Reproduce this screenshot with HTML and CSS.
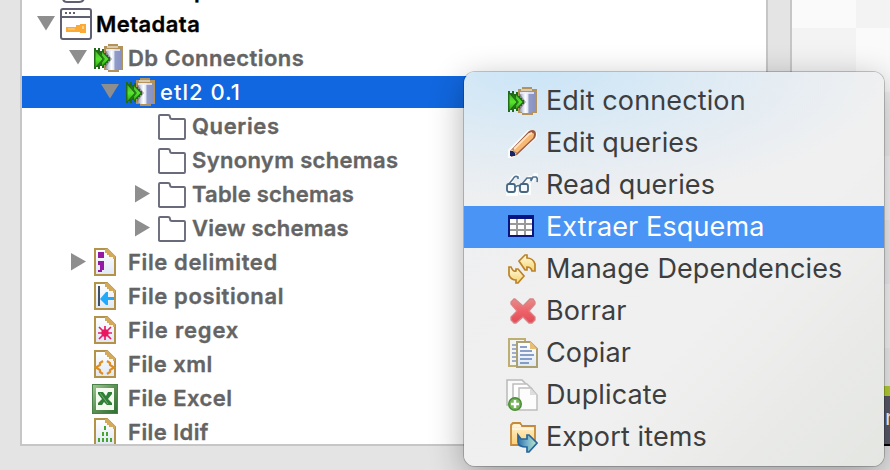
FILE: index.html
```html
<!DOCTYPE html>
<html lang="es">
<head>
<meta charset="utf-8">
<title>Metadata</title>
<link rel="stylesheet" href="styles.css">
</head>
<body>
<svg class="defs" width="0" height="0">
  <defs>
    <linearGradient id="cyl"><stop offset="0" stop-color="#8f8a88"/><stop offset=".25" stop-color="#d5dcf0"/><stop offset=".4" stop-color="#fff"/><stop offset=".56" stop-color="#dfe4f5"/><stop offset=".62" stop-color="#929ccb"/><stop offset="1" stop-color="#8793c2"/></linearGradient>
    <linearGradient id="grn" x2="0" y2="1"><stop offset="0" stop-color="#4cb52a"/><stop offset=".5" stop-color="#57e52e"/><stop offset="1" stop-color="#35a31a"/></linearGradient>
    <linearGradient id="paper" x2="0" y2="1"><stop offset="0" stop-color="#fff"/><stop offset="1" stop-color="#dfe8f5"/></linearGradient>
    <linearGradient id="xls" x2="1" y2="1"><stop offset="0" stop-color="#9dc792"/><stop offset=".5" stop-color="#5c8f55"/><stop offset="1" stop-color="#2e7032"/></linearGradient>
    <linearGradient id="gold" x2="0" y2="1"><stop offset="0" stop-color="#fffbe0"/><stop offset="1" stop-color="#f5d26c"/></linearGradient>
    <linearGradient id="red" x2="0" y2="1"><stop offset="0" stop-color="#e58d89"/><stop offset=".5" stop-color="#ef626a"/><stop offset="1" stop-color="#e34b55"/></linearGradient>
    <linearGradient id="fold" x2="0" y2="1"><stop offset="0" stop-color="#fff3d2"/><stop offset="1" stop-color="#fbcf74"/></linearGradient>
    <linearGradient id="arr"><stop offset="0" stop-color="#2e6fa8"/><stop offset=".5" stop-color="#78b5cc"/><stop offset="1" stop-color="#bfe5c4"/></linearGradient>
    <symbol id="db" viewBox="0 0 32 32">
      <path d="M12 4h4V2h10v2h5v24h-4v2H16v-2h-4z" fill="#b3935a"/>
      <path d="M15 4h11v2H15z" fill="#d8cbb0"/>
      <path d="M13 7h16v20h-3v1H16v-1h-3z" fill="url(#cyl)"/>
      <path d="M14 7h14v2H14z" fill="#eceef6" opacity=".8"/>
      <path d="M13 8l7 9-7 9z" fill="#66635e" opacity=".55"/>
      <path d="M2 6h2v2h2V6h2v3h2V7h2v4h2v2h2v2h2v4h-2v2h-2v2h-2v3h-2v-2H8v3H6v-2H4v2H2z" fill="#206b16"/>
      <path d="M3.500 9l7 8-7 8z" fill="url(#grn)"/>
      <path d="M10 10l6.500 7-6.500 7v-4l2-3-2-3z" fill="url(#grn)"/>
      <path d="M7 10.500l5.200 6.500L7 23.500" fill="none" stroke="#247d18" stroke-width="1.100"/>
    </symbol>
    <symbol id="sql" viewBox="0 0 32 32">
      <path d="M3 8v16q0 4 4 4h12q5 0 5-5V8" fill="#fff" stroke="#5f6071" stroke-width="2"/>
      <path d="M4 23h15l5-3" fill="none" stroke="#5f6071" stroke-width="2"/>
    </symbol>
    <symbol id="meta" viewBox="0 0 32 32">
      <rect x="1" y="1" width="30" height="30" rx="2" fill="#fff" stroke="#5f6071" stroke-width="2"/>
      <path d="M1 9h30" stroke="#5f6071" stroke-width="2"/>
      <path d="M5 5h2M9 5h2M13 5h2" stroke="#5f6071" stroke-width="2"/>
      <path d="M6 19h10v-2h4v-1h6v9h-6v-1H6z" fill="#fbab35"/>
      <path d="M8 21h7" stroke="#ffd48b"/><path d="M22 18h2v3h-2z" fill="#ffcf80"/>
    </symbol>
    <symbol id="folder" viewBox="0 0 32 32">
      <path d="M3 29V6q0-1 1-1h8q2 0 2 2 0 2 2 2h12q1 0 1 1v18q0 1-1 1H4q-1 0-1-1z" fill="#fff" stroke="#696b7b" stroke-width="1.900"/>
    </symbol>
    <symbol id="page" viewBox="0 0 32 32">
      <path d="M3 3h12l8 8v18H3z" fill="url(#paper)" stroke="#b4924a" stroke-width="2"/>
      <path d="M13 3h3l7 7v3h-2v-2h-4V9h-2V7h-2z" fill="#d3aa5c"/>
    </symbol>
    <symbol id="delim" viewBox="0 0 32 32"><use href="#page"/>
      <path d="M6 6h6v6H6zM6 15h6v9h-2v2H6v-2h2v-5H6z" fill="#951aa3"/></symbol>
    <symbol id="posit" viewBox="0 0 32 32"><use href="#page"/>
      <path d="M6 6h2v20H6z" fill="#405064"/><path d="M8 19l6-7h2v5h6v3h-6v5h-2z" fill="#22a9fa"/></symbol>
    <symbol id="regex" viewBox="0 0 32 32"><use href="#page"/>
      <path d="M13 12v14M6 19h14M7 13l12 12M19 13L7 25" stroke="#ed1968" stroke-width="1.700" fill="none"/><circle cx="13" cy="19" r="3.700" fill="#e9175f"/></symbol>
    <symbol id="xml" viewBox="0 0 32 32"><use href="#page"/>
      <path d="M11 13l-3 2v2l-4 2.500 4 2.500v2l3 2M15 13l3 2v2l4 2.500-4 2.500v2l-3 2" stroke="#df8d22" stroke-width="2.200" fill="none"/></symbol>
    <symbol id="excel" viewBox="0 0 32 32">
      <path d="M0 2h26v30H0z" fill="#498247"/><path d="M1 3h24v28H1z" fill="url(#xls)"/>
      <path d="M4 6h18v22H4z" fill="#f5faf1"/><path d="M6 10h5l3 4 2-4h4v2l-4 5 4 4v2h-5l-3-3-2 3H6v-2l4-4-4-5z" fill="#307f38"/>
      <path d="M8 11l8 11" stroke="#73ae6b" stroke-width="1"/></symbol>
    <symbol id="ldif" viewBox="0 0 32 32"><use href="#page"/>
      <path d="M12 10h2v4h-2zM10 16h2v4h-2zM14 16h2v4h-2zM6 22h2v4H6zM10 22h2v4h-2zM14 22h2v4h-2zM18 22h2v4h-2z" fill="#47a52d"/></symbol>
    <symbol id="pencil" viewBox="0 0 32 32">
      <path d="M2 31v-8L22 3h6l3 3v5L11 28l-5 3z" fill="#fff" opacity=".85"/>
      <path d="M4 24L23 4q4-2 6 0 2 3 0 7L11 28l-6 2z" fill="#9b5940"/>
      <path d="M7 23L24 6q3-1 4 1 0 2-1 4L11 26z" fill="#f7b874"/>
      <path d="M8 22L23 7l3-1" stroke="#ffe4bd" stroke-width="2" fill="none"/>
      <path d="M6 22l5 5-3 1-4-3z" fill="#dccc9c"/><path d="M4 24h3l2 2v3H4z" fill="#172366"/>
    </symbol>
    <symbol id="glasses" viewBox="0 0 32 32">
      <path d="M2 18l5-9q4-4 6 0M18 18l4-8q2-3 5 0l2-4q3 0 3 3M1 17h9v8H1zM15 16h8v8h-8z" stroke="#fff" stroke-width="4" fill="none" opacity=".8"/>
      <path d="M2 16l5-6q2-4 5-2v2M16 15l5-6h4v3l2-4h3q2 1 1 5M10 18q2-3 4 0" stroke="#50718f" stroke-width="1.600" fill="none"/>
      <rect x="1" y="15" width="8" height="8" rx="2" fill="#f5faff" stroke="#456581" stroke-width="1.800"/>
      <rect x="14" y="15" width="8" height="8" rx="2" fill="#f5faff" stroke="#456581" stroke-width="1.800"/>
    </symbol>
    <symbol id="table" viewBox="0 0 32 32">
      <path d="M2 4h26v22H2z" fill="#06157f"/><path d="M4 8h22v16H4z" fill="#999"/>
      <path d="M4 8h6v4H4zM12 8h6v4h-6zM20 8h6v4h-6zM4 14h6v4H4zM12 14h6v4h-6zM20 14h6v4h-6zM4 20h6v4H4zM12 20h6v4h-6zM20 20h6v4h-6z" fill="#fff"/>
    </symbol>
    <symbol id="deps" viewBox="0 0 32 32">
      <path d="M13 8l6-6h2v3q6 0 8 6v7h-3q-1-4-5-4v3h-2z" fill="url(#gold)" stroke="#bb8228" stroke-width="1.700"/>
      <path d="M3 14h2q2 5 5 4v-2h2l6 7-6 7h-2v-3q-5 0-7-5z" fill="url(#gold)" stroke="#bb8228" stroke-width="1.700"/>
    </symbol>
    <symbol id="delete" viewBox="0 0 32 32">
      <path d="M9 4l8 7 7-7h3l2 3v2l-6 7 6 6v3l-3 3h-3l-6-6-7 6H8l-3-3v-3l6-6-6-7V7l3-3z" fill="url(#red)" stroke="#d98387" stroke-width="1.300"/>
    </symbol>
    <symbol id="copy" viewBox="0 0 32 32">
      <path d="M3 2h16v27H3z" fill="#f5f5f0" stroke="#bfae73" stroke-width="2"/>
      <path d="M6 8h5M6 12h5M6 16h5M6 20h5M6 24h5" stroke="#8297c0" stroke-width="1.700"/>
      <path d="M11 5h13l7 7v18H11z" fill="url(#paper)" stroke="#aaa071" stroke-width="2"/>
      <path d="M24 4l7 8h-7z" fill="#e8bf75"/>
      <path d="M14 10h7M14 14h12M14 18h14M14 22h12M14 26h9" stroke="#6482b8" stroke-width="1.700"/>
    </symbol>
    <symbol id="dup" viewBox="0 0 32 32">
      <path d="M1 1h15l5 5v20H1z" fill="#fafafa" stroke="#b9b9b9" stroke-width="1.500"/>
      <path d="M7 5h14l5 5v18H7z" fill="#fff" stroke="#bdbdbd" stroke-width="1.500"/>
      <path d="M13 9h12l6 7v15H13z" fill="#fcfcfc" stroke="#bdbdbd" stroke-width="1.500"/><path d="M24 9v7h7z" fill="#ddd"/>
      <circle cx="9" cy="25" r="7" fill="#4b8b39"/><circle cx="9" cy="25" r="5.500" fill="#75b458"/><path d="M9 21v8M5 25h8" stroke="#fff" stroke-width="2.500"/>
    </symbol>
    <symbol id="export" viewBox="0 0 32 32">
      <path d="M5 4l2-2h7l2 3h13v18l-2 1H5z" fill="url(#fold)" stroke="#c78a3b" stroke-width="1.800"/>
      <path d="M7 5h8M6 8h22" stroke="#fff5dc" stroke-width="2"/>
      <path d="M12 14l3 4h6v-4h2l8 8-8 9h-2v-5q-9 0-9-5z" fill="url(#arr)" stroke="#27669c" stroke-width="1.700"/>
    </symbol>
  </defs>
</svg>
<main class="window">
  <section class="tree">
    <div class="row lv0"><i class="tw"></i><svg class="ic"><use href="#sql"/></svg><span class="label black">SQL Templates</span></div>
    <div class="row lv0"><i class="tw open"></i><svg class="ic"><use href="#meta"/></svg><span class="label black">Metadata</span></div>
    <div class="row lv1"><i class="tw open"></i><svg class="ic"><use href="#db"/></svg><span class="label">Db Connections</span></div>
    <div class="row lv2 selected"><i class="tw open"></i><svg class="ic"><use href="#db"/></svg><span class="label">etl2 0.1</span></div>
    <div class="row lv3"><i class="tw"></i><svg class="ic"><use href="#folder"/></svg><span class="label wide">Queries</span></div>
    <div class="row lv3"><i class="tw"></i><svg class="ic"><use href="#folder"/></svg><span class="label snug">Synonym schemas</span></div>
    <div class="row lv3"><i class="tw closed"></i><svg class="ic"><use href="#folder"/></svg><span class="label tight">Table schemas</span></div>
    <div class="row lv3"><i class="tw closed"></i><svg class="ic"><use href="#folder"/></svg><span class="label tight">View schemas</span></div>
    <div class="row lv1"><i class="tw closed"></i><svg class="ic"><use href="#delim"/></svg><span class="label wide">File delimited</span></div>
    <div class="row lv1"><i class="tw"></i><svg class="ic"><use href="#posit"/></svg><span class="label wide">File positional</span></div>
    <div class="row lv1"><i class="tw"></i><svg class="ic"><use href="#regex"/></svg><span class="label wider">File regex</span></div>
    <div class="row lv1"><i class="tw"></i><svg class="ic"><use href="#xml"/></svg><span class="label">File xml</span></div>
    <div class="row lv1"><i class="tw"></i><svg class="ic"><use href="#excel"/></svg><span class="label">File Excel</span></div>
    <div class="row lv1"><i class="tw"></i><svg class="ic"><use href="#ldif"/></svg><span class="label">File ldif</span></div>
  </section>
  <section class="canvas"><div class="tab">n</div></section>
</main>
<nav class="menu">
  <div class="item"><svg class="ic"><use href="#db"/></svg><span>Edit connection</span></div>
  <div class="item"><svg class="ic"><use href="#pencil"/></svg><span>Edit queries</span></div>
  <div class="item"><svg class="ic"><use href="#glasses"/></svg><span>Read queries</span></div>
  <div class="item active"><svg class="ic"><use href="#table"/></svg><span>Extraer Esquema</span></div>
  <div class="item"><svg class="ic"><use href="#deps"/></svg><span>Manage Dependencies</span></div>
  <div class="item"><svg class="ic"><use href="#delete"/></svg><span>Borrar</span></div>
  <div class="item"><svg class="ic"><use href="#copy"/></svg><span>Copiar</span></div>
  <div class="item"><svg class="ic"><use href="#dup"/></svg><span>Duplicate</span></div>
  <div class="item"><svg class="ic"><use href="#export"/></svg><span>Export items</span></div>
</nav>
</body>
</html>
```
FILE: styles.css
```css
* { box-sizing: border-box; }
body {
  margin: 0;
  width: 890px;
  height: 470px;
  overflow: hidden;
  background: #e4e4e4;
  font-family: Inter, "Liberation Sans", sans-serif;
}
.defs { display: block; }
.window {
  display: grid;
  grid-template-columns: 748px 1fr;
  column-gap: 22px;
  height: 446px;
  padding-left: 20px;
}
.tree {
  height: 446px;
  overflow: hidden;
  background: #fff;
  border: 2px solid #c6c6c6;
  border-top: 0;
  display: flex;
  flex-direction: column;
}
.row {
  display: flex;
  align-items: center;
  flex: none;
  height: 34px;
}
.row:first-child { margin-top: -27px; }
.lv0 { padding-left: 14px; }
.lv1 { padding-left: 46px; }
.lv2 { padding-left: 78px; }
.lv3 { padding-left: 110px; }
.ic { width: 32px; height: 32px; flex: none; display: block; }
.tw {
  width: 20px;
  height: 20px;
  flex: none;
  margin-right: 4px;
}
.tw.open { background: #8e8e8e; clip-path: polygon(5% 10%, 95% 10%, 50% 83%); }
.tw.closed { background: #8e8e8e; clip-path: polygon(15% 5%, 90% 48%, 15% 93%); }
.label {
  margin-left: 4px;
  font-size: 22px;
  font-weight: 600;
  line-height: 34px;
  letter-spacing: .45px;
  -webkit-text-stroke: .35px currentColor;
  color: #646464;
  white-space: nowrap;
}
.tight { letter-spacing: .2px; }
.snug { letter-spacing: .33px; }
.wide { letter-spacing: .62px; }
.wider { letter-spacing: .8px; }
.black { color: #000; }
.selected { height: 32px; margin: 1px 0; background: #1167df; }
.selected .label { color: #fff; font-weight: 500; letter-spacing: 1px; -webkit-text-stroke: 0; }
.canvas {
  border-left: 2px solid #c6c6c6;
  background: repeating-conic-gradient(#f3f3f3 0 25%, #fafafa 0 50%) 0 -36px / 128px 128px;
  display: flex;
  flex-direction: column;
  align-items: flex-end;
  justify-content: flex-end;
}
.tab {
  width: 40px;
  height: 60px;
  padding-left: 35px;
  border-top: 10px solid #b9d434;
  border-bottom: 2px solid #000;
  background: #5a5b6b;
  color: #fff;
  font-size: 22px;
  line-height: 42px;
}
.menu {
  position: absolute;
  left: 464px;
  top: 72px;
  width: 420px;
  height: 394px;
  padding: 8px 0;
  border-radius: 11px;
  background:
    radial-gradient(ellipse 350px 130px at 18% 0, #cbe5f7 0, rgba(215, 233, 246, .65) 50%, rgba(238, 238, 239, 0) 100%),
    linear-gradient(135deg, #eeeff1 0, #f0f0f0 60%, #e4e6e2 100%);
  box-shadow: 0 0 0 1px rgba(0, 0, 0, .2), 0 9px 34px rgba(0, 0, 0, .32);
}
.item {
  display: flex;
  align-items: center;
  height: 42px;
  padding-left: 42px;
  color: #3d3e40;
  font-size: 27px;
  letter-spacing: .12px;
  line-height: 42px;
  white-space: nowrap;
}
.item span { margin-left: 8px; }
.item.active { background: #4a94f5; color: #fff; }
```
